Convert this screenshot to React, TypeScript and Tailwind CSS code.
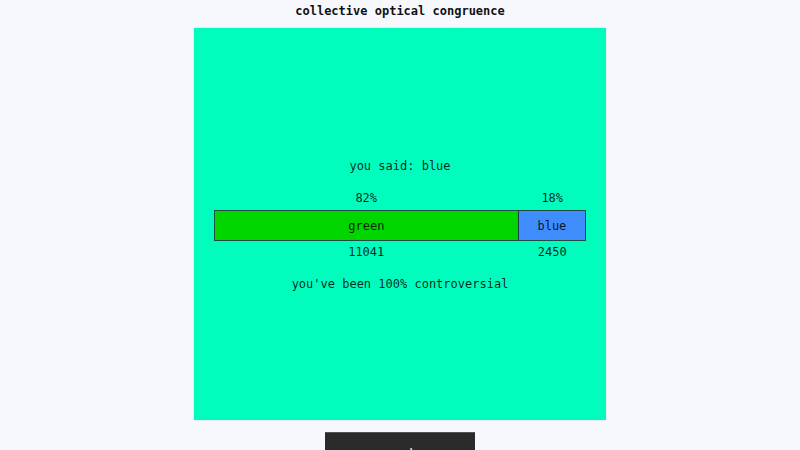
export default function App() {
  const green = 11041;
  const blue = 2450;
  const total = green + blue;
  const greenPct = Math.round((green / total) * 100);
  const bluePct = 100 - greenPct;

  return (
    <div className="min-h-screen bg-[#f7f8fd] flex flex-col items-center font-['DejaVu_Sans_Mono',monospace] text-[12px] leading-4">
      <h1 className="pt-[3px] mb-[9px] font-bold text-[#111]">collective optical congruence</h1>

      <div className="w-[412px] h-[392px] bg-[#00fdbe] shadow-[0_0_2px_rgba(0,0,0,0.15)] flex flex-col justify-center px-5 pt-[2px] text-black/85">
        <p className="text-center">you said: blue</p>

        <div className="mt-4 flex">
          <div className="text-center" style={{ width: `${(green / total) * 100}%` }}>
            {greenPct}%
          </div>
          <div className="flex-1 text-center">{bluePct}%</div>
        </div>

        <div className="mt-1 h-[31px] flex border border-[#1d4d40]">
          <div
            className="bg-[#00d500] flex items-center justify-center"
            style={{ width: `${(green / total) * 100}%` }}
          >
            green
          </div>
          <div className="flex-1 bg-[#3f8cfd] border-l border-[#1d3f4a] flex items-center justify-center">
            blue
          </div>
        </div>

        <div className="mt-[3px] flex">
          <div className="text-center" style={{ width: `${(green / total) * 100}%` }}>
            {green}
          </div>
          <div className="flex-1 text-center">{blue}</div>
        </div>

        <p className="mt-4 text-center">you've been 100% controversial</p>
      </div>

      <button className="mt-3 w-[150px] h-10 bg-[#2b2b2b] border-t border-[#555] text-white text-[13px]">
        next
      </button>
    </div>
  );
}
